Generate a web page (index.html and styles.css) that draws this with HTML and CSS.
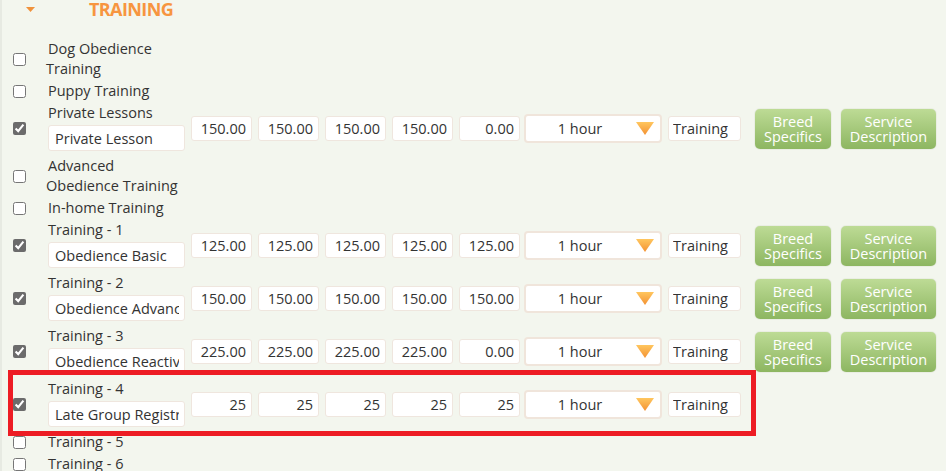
FILE: index.html
```html
<!DOCTYPE html>
<html lang="en">
<head>
  <meta charset="UTF-8" />
  <title>Services - Training</title>
  <link rel="stylesheet" href="styles.css">
</head>
<body>

<div class="section-head">
  <svg class="caret" width="9" height="5" viewBox="0 0 9 5"><polygon points="0,0 9,0 4.5,5" fill="#f0923c"/></svg>
  <h3>TRAINING</h3>
</div>

<div class="service-list">

  <div class="service-row">
    <div class="col-check"><input type="checkbox"></div>
    <div class="col-name"><div class="name">Dog Obedience Training</div></div>
  </div>

  <div class="service-row">
    <div class="col-check"><input type="checkbox"></div>
    <div class="col-name"><div class="name">Puppy Training</div></div>
  </div>

  <div class="service-row">
    <div class="col-check"><input type="checkbox" checked></div>
    <div class="col-name">
      <div class="name">Private Lessons</div>
      <input class="name-input" type="text" value="Private Lesson">
    </div>
    <input class="price" type="text" value="150.00">
    <input class="price" type="text" value="150.00">
    <input class="price" type="text" value="150.00">
    <input class="price" type="text" value="150.00">
    <input class="price" type="text" value="0.00">
    <div class="duration"><span>1 hour</span><svg width="18" height="13" viewBox="0 0 18 13"><defs><linearGradient id="arr1" x1="0" y1="0" x2="0" y2="1"><stop offset="0" stop-color="#ffc65e"/><stop offset="1" stop-color="#f39234"/></linearGradient></defs><polygon points="0,0 18,0 9,13" fill="url(#arr1)"/></svg></div>
    <input class="category" type="text" value="Training">
    <button class="btn btn-breed">Breed<br>Specifics</button>
    <button class="btn btn-desc">Service<br>Description</button>
  </div>

  <div class="service-row">
    <div class="col-check"><input type="checkbox"></div>
    <div class="col-name"><div class="name">Advanced Obedience Training</div></div>
  </div>

  <div class="service-row">
    <div class="col-check"><input type="checkbox"></div>
    <div class="col-name"><div class="name">In-home Training</div></div>
  </div>

  <div class="service-row">
    <div class="col-check"><input type="checkbox" checked></div>
    <div class="col-name">
      <div class="name">Training - 1</div>
      <input class="name-input" type="text" value="Obedience Basic">
    </div>
    <input class="price" type="text" value="125.00">
    <input class="price" type="text" value="125.00">
    <input class="price" type="text" value="125.00">
    <input class="price" type="text" value="125.00">
    <input class="price" type="text" value="125.00">
    <div class="duration"><span>1 hour</span><svg width="18" height="13" viewBox="0 0 18 13"><defs><linearGradient id="arr2" x1="0" y1="0" x2="0" y2="1"><stop offset="0" stop-color="#ffc65e"/><stop offset="1" stop-color="#f39234"/></linearGradient></defs><polygon points="0,0 18,0 9,13" fill="url(#arr2)"/></svg></div>
    <input class="category" type="text" value="Training">
    <button class="btn btn-breed">Breed<br>Specifics</button>
    <button class="btn btn-desc">Service<br>Description</button>
  </div>

  <div class="service-row">
    <div class="col-check"><input type="checkbox" checked></div>
    <div class="col-name">
      <div class="name">Training - 2</div>
      <input class="name-input" type="text" value="Obedience Advanced">
    </div>
    <input class="price" type="text" value="150.00">
    <input class="price" type="text" value="150.00">
    <input class="price" type="text" value="150.00">
    <input class="price" type="text" value="150.00">
    <input class="price" type="text" value="150.00">
    <div class="duration"><span>1 hour</span><svg width="18" height="13" viewBox="0 0 18 13"><defs><linearGradient id="arr3" x1="0" y1="0" x2="0" y2="1"><stop offset="0" stop-color="#ffc65e"/><stop offset="1" stop-color="#f39234"/></linearGradient></defs><polygon points="0,0 18,0 9,13" fill="url(#arr3)"/></svg></div>
    <input class="category" type="text" value="Training">
    <button class="btn btn-breed">Breed<br>Specifics</button>
    <button class="btn btn-desc">Service<br>Description</button>
  </div>

  <div class="service-row">
    <div class="col-check"><input type="checkbox" checked></div>
    <div class="col-name">
      <div class="name">Training - 3</div>
      <input class="name-input" type="text" value="Obedience Reactive">
    </div>
    <input class="price" type="text" value="225.00">
    <input class="price" type="text" value="225.00">
    <input class="price" type="text" value="225.00">
    <input class="price" type="text" value="225.00">
    <input class="price" type="text" value="0.00">
    <div class="duration"><span>1 hour</span><svg width="18" height="13" viewBox="0 0 18 13"><defs><linearGradient id="arr4" x1="0" y1="0" x2="0" y2="1"><stop offset="0" stop-color="#ffc65e"/><stop offset="1" stop-color="#f39234"/></linearGradient></defs><polygon points="0,0 18,0 9,13" fill="url(#arr4)"/></svg></div>
    <input class="category" type="text" value="Training">
    <button class="btn btn-breed">Breed<br>Specifics</button>
    <button class="btn btn-desc">Service<br>Description</button>
  </div>

  <!-- highlighted row -->
  <div class="service-row highlight">
    <div class="col-check"><input type="checkbox" checked></div>
    <div class="col-name">
      <div class="name">Training - 4</div>
      <input class="name-input" type="text" value="Late Group Registration">
    </div>
    <input class="price" type="text" value="25">
    <input class="price" type="text" value="25">
    <input class="price" type="text" value="25">
    <input class="price" type="text" value="25">
    <input class="price" type="text" value="25">
    <div class="duration"><span>1 hour</span><svg width="18" height="13" viewBox="0 0 18 13"><defs><linearGradient id="arr5" x1="0" y1="0" x2="0" y2="1"><stop offset="0" stop-color="#ffc65e"/><stop offset="1" stop-color="#f39234"/></linearGradient></defs><polygon points="0,0 18,0 9,13" fill="url(#arr5)"/></svg></div>
    <input class="category" type="text" value="Training">
  </div>

  <div class="service-row">
    <div class="col-check"><input type="checkbox"></div>
    <div class="col-name"><div class="name">Training - 5</div></div>
  </div>

  <div class="service-row">
    <div class="col-check"><input type="checkbox"></div>
    <div class="col-name"><div class="name">Training - 6</div></div>
  </div>

</div>

</body>
</html>
```

FILE: styles.css
```css
html, body {
  margin: 0;
  padding: 0;
  height: 100%;
  overflow: hidden;
}

body {
  background: #f3f6ee;
  box-shadow: inset 2px 0 #e7eae2;
  font-family: "Open Sans", "Noto Sans", sans-serif;
  font-size: 14.5px;
  color: #333;
}

.section-head {
  display: flex;
  align-items: flex-start;
  height: 38px;
}

.section-head .caret {
  margin: 7px 0 0 26px;
}

.section-head h3 {
  margin: 0 0 0 54px;
  font-size: 18px;
  line-height: 18px;
  letter-spacing: -0.6px;
  font-weight: bold;
  color: #f7953f;
}

.service-row {
  position: relative;
  display: flex;
  align-items: center;
  padding: 1px 0;
}

.col-check {
  width: 46px;
  padding-left: 13px;
  box-sizing: border-box;
  flex: none;
}

.col-check input {
  display: block;
  width: 13px;
  height: 13px;
  margin: 0;
  accent-color: #6b6b6b;
}

.col-name {
  width: 145px;
  flex: none;
}

.name {
  width: 138px;
  line-height: 20px;
  text-indent: 2px;
}

input[type="text"] {
  box-sizing: border-box;
  font-family: inherit;
  font-size: 14.5px;
  color: #333;
  background: #fff;
  border: 1px solid #efe6de;
  border-radius: 3px;
  outline: none;
}

.name-input {
  display: block;
  width: 137px;
  height: 26px;
  margin: 2px 0 3px 2px;
  padding: 0 5px 0 6px;
}

.price {
  width: 61px;
  height: 25px;
  padding: 0 5px;
  text-align: right;
  flex: none;
}

.price + .price {
  margin-left: 6px;
}

.duration {
  display: flex;
  align-items: center;
  box-sizing: border-box;
  width: 138px;
  height: 29px;
  margin-left: 4px;
  background: #fff;
  border: 2px solid #f0e5db;
  border-radius: 4px;
  flex: none;
}

.duration span {
  flex: 1;
  text-align: center;
}

.duration svg {
  margin: 0 6px 0 2px;
}

.category {
  width: 73px;
  height: 25px;
  margin-left: 6px;
  padding: 0 4px;
  flex: none;
}

.btn {
  height: 40px;
  padding: 0;
  margin-left: 14px;
  border: none;
  border-radius: 5px;
  background: linear-gradient(#bddb95, #8db661);
  box-shadow: 0 0 1px rgba(80, 110, 40, 0.5);
  color: #fff;
  font-family: inherit;
  font-size: 14.5px;
  line-height: 15px;
  flex: none;
}

.btn-breed {
  width: 76px;
}

.btn-desc {
  width: 95px;
  margin-left: 10px;
}

.highlight::after {
  content: "";
  position: absolute;
  top: -8px;
  left: 8px;
  width: 748px;
  height: 66px;
  box-sizing: border-box;
  border: 5px solid #ed1c24;
  pointer-events: none;
}
```
